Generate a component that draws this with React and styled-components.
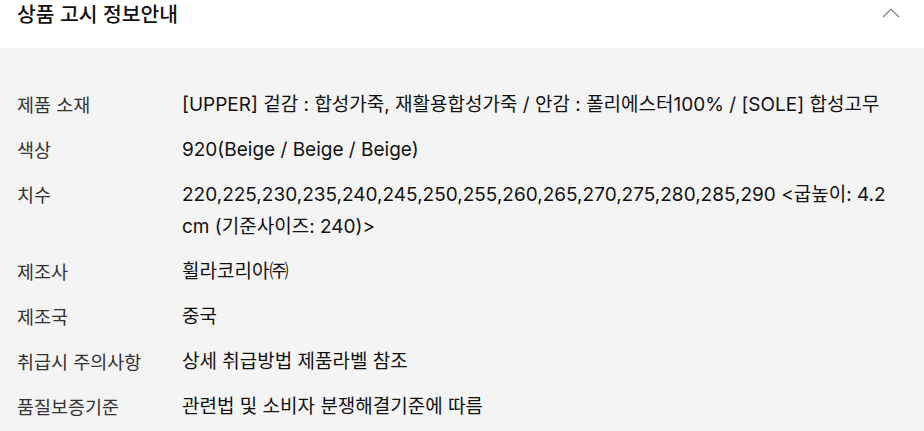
import { Fragment } from 'react';
import styled, { createGlobalStyle } from 'styled-components';

const GlobalStyle = createGlobalStyle`
	html, body {
		margin: 0;
		padding: 0;
		background: #fff;
	}
	body {
		font-family: "Inter", "Noto Sans CJK KR", sans-serif;
		color: #111;
	}
`;

const Section = styled.section`
	width: 924px;
`;
const Header = styled.header`
	display: flex;
	align-items: center;
	justify-content: space-between;
	height: 48px;
	box-sizing: border-box;
	padding: 0 24px 18px 17px;
	background: #fff;
`;
const Title = styled.h2`
	margin: 0;
	font-size: 20.4px;
	font-weight: 500;
	line-height: 28px;
	color: #111;
`;
const Chevron = styled.svg`
	width: 18px;
	height: 10px;
	margin-top: -4px;
	stroke: #8a8a8a;
	stroke-width: 1.3;
	fill: none;
`;
const Body = styled.div`
	background: #f4f4f4;
	padding: 41px 17px 6px;
	min-height: 383px;
	box-sizing: border-box;
`;
const Table = styled.dl`
	margin: 0;
	display: grid;
	grid-template-columns: 165px 1fr;
	row-gap: 13px;
`;
const Label = styled.dt`
	font-size: 18.5px;
	line-height: 32px;
	color: #333;
`;
const Value = styled.dd`
	margin: 0;
	font-size: 19px;
	line-height: 32px;
	color: #111;
`;

const rows = [
	['제품 소재', '[UPPER] 겉감 : 합성가죽, 재활용합성가죽 / 안감 : 폴리에스터100% / [SOLE] 합성고무'],
	['색상', '920(Beige / Beige / Beige)'],
	['치수', '220,225,230,235,240,245,250,255,260,265,270,275,280,285,290 <굽높이: 4.2 cm (기준사이즈: 240)>'],
	['제조사', '휠라코리아㈜'],
	['제조국', '중국'],
	['취급시 주의사항', '상세 취급방법 제품라벨 참조'],
	['품질보증기준', '관련법 및 소비자 분쟁해결기준에 따름'],
];

export default function App() {
	return (
		<>
			<GlobalStyle />
			<Section>
				<Header>
					<Title>상품 고시 정보안내</Title>
					<Chevron viewBox="0 0 18 10" aria-hidden="true">
						<path d="M1 9L9 1.2L17 9" />
					</Chevron>
				</Header>
				<Body>
					<Table>
						{rows.map(([k, v]) => (
							<Fragment key={k}>
								<Label>{k}</Label>
								<Value>{v}</Value>
							</Fragment>
						))}
					</Table>
				</Body>
			</Section>
		</>
	);
}
